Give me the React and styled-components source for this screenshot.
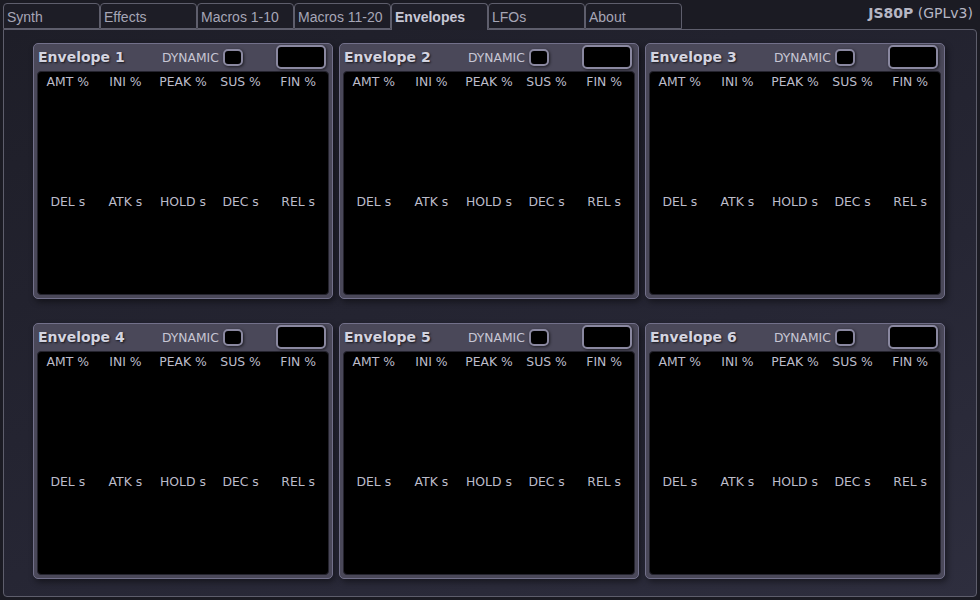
import styled, { createGlobalStyle } from "styled-components";

//==============================================================================
// STYLING
//==============================================================================
const GlobalStyle = createGlobalStyle`
  html, body {
    margin: 0;
    padding: 0;
    background: #1b1b23;
  }
  body {
    width: 980px;
    height: 600px;
    overflow: hidden;
    font-family: "DejaVu Sans", sans-serif;
  }
`

const Page = styled.div`
  width: 980px;
  height: 600px;
  box-sizing: border-box;
  padding: 3px 3px 3px 3px;
  display: flex;
  flex-direction: column;
`

const TabBar = styled.div`
  display: flex;
  align-items: flex-end;
  height: 26px;
  position: relative;
  z-index: 1;
`

const Tab = styled.div`
  width: 97px;
  box-sizing: border-box;
  border: 1px solid #5e5e6c;
  border-bottom: ${props => props.$active ? "none" : "1px solid #5e5e6c"};
  border-radius: 4px 4px 0 0;
  background: ${props => props.$active ? "#1f1f29" : "#1d1d26"};
  color: ${props => props.$active ? "#c8c8d6" : "#a6a6b6"};
  font-family: "Liberation Sans", Arial, sans-serif;
  font-size: 14px;
  font-weight: ${props => props.$active ? 700 : 400};
  padding: 5px 0 0 3px;
  margin-bottom: ${props => props.$active ? "-1px" : "0"};
  height: ${props => props.$active ? "27px" : "26px"};
`

const Brand = styled.div`
  margin-left: auto;
  align-self: flex-start;
  padding: 2px 4px 0 0;
  font-size: 14px;
  color: #b6b6c4;

  b {
    font-weight: 700;
  }
`

const Main = styled.div`
  flex: 1;
  box-sizing: border-box;
  border: 1px solid #5e5e6c;
  border-radius: 0 4px 4px 4px;
  background: linear-gradient(160deg, #1e1e28 0%, #262634 60%, #2e2e3e 100%);
  padding: 13px 0 0 29px;
`

const Grid = styled.div`
  display: grid;
  grid-template-columns: repeat(3, 300px);
  grid-template-rows: repeat(2, 256px);
  column-gap: 6px;
  row-gap: 24px;
`

const Envelope = styled.div`
  box-sizing: border-box;
  background: #4a4859;
  border: 1px solid #72708a;
  border-radius: 5px;
  box-shadow: 2px 3px 6px rgba(0, 0, 0, 0.45);
  padding: 0 3px 3px 3px;
  display: flex;
  flex-direction: column;
`

const Header = styled.div`
  height: 27px;
  display: flex;
  align-items: center;
  position: relative;
`

const Title = styled.div`
  width: 124px;
  padding-left: 1px;
  margin-top: -1px;
  font-size: 14px;
  font-weight: 700;
  color: #d4d4e0;
  text-shadow: 1px 1px 2px rgba(0, 0, 0, 0.7);
`

const Dynamic = styled.div`
  font-size: 12.3px;
  color: #c6c6d4;
  display: flex;
  align-items: center;
  gap: 4px;
`

const Check = styled.div`
  width: 16px;
  height: 13px;
  background: #000;
  border: 2px solid #8a88a0;
  border-radius: 5px;
  box-shadow: 1px 1px 3px rgba(0, 0, 0, 0.6);
`

const Screen = styled.div`
  position: absolute;
  right: 3px;
  top: 1px;
  width: 46px;
  height: 20px;
  background: #000;
  border: 2px solid #8a88a0;
  border-radius: 5px;
  box-shadow: 1px 1px 3px rgba(0, 0, 0, 0.6);
`

const Knobs = styled.div`
  flex: 1;
  background: #000;
  border-radius: 4px;
  border: 1px solid #25242e;
  display: grid;
  grid-template-columns: repeat(5, 1fr);
  grid-template-rows: 120px 1fr;
  padding: 0 1px;
`

const Label = styled.div`
  text-align: center;
  font-size: 12.4px;
  color: #bcbcca;
  padding-top: 2px;
`

//==============================================================================
// APP
//==============================================================================
const tabs = ["Synth", "Effects", "Macros 1-10", "Macros 11-20", "Envelopes", "LFOs", "About"]
const topLabels = ["AMT %", "INI %", "PEAK %", "SUS %", "FIN %"]
const bottomLabels = ["DEL s", "ATK s", "HOLD s", "DEC s", "REL s"]

const EnvelopePanel = ({index}) => (
    <Envelope>
        <Header>
            <Title>Envelope {index}</Title>
            <Dynamic>DYNAMIC <Check/></Dynamic>
            <Screen/>
        </Header>
        <Knobs>
            {topLabels.map(l => <Label key={l}>{l}</Label>)}
            {bottomLabels.map(l => <Label key={l}>{l}</Label>)}
        </Knobs>
    </Envelope>
)

const App = () => {
    return (
        <Page>
            <GlobalStyle/>
            <TabBar>
                {tabs.map(t => <Tab key={t} $active={t === "Envelopes"}>{t}</Tab>)}
                <Brand><b>JS80P</b> (GPLv3)</Brand>
            </TabBar>
            <Main>
                <Grid>
                    {[1, 2, 3, 4, 5, 6].map(i => <EnvelopePanel key={i} index={i}/>)}
                </Grid>
            </Main>
        </Page>
    )
}

export default App;
